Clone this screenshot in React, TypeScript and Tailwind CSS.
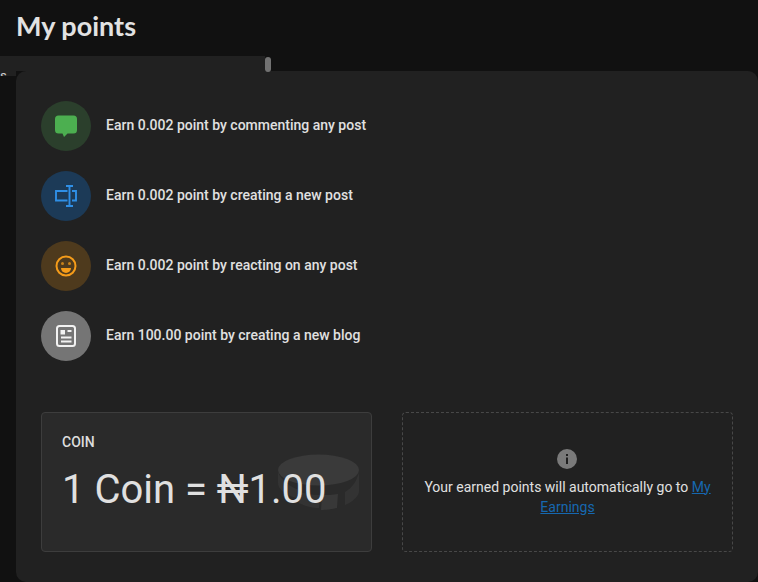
import React from "react";

const rows = [
  {
    text: "Earn 0.002 point by commenting any post",
    circle: "bg-[#2b3f2c]",
    icon: (
      <svg width="24" height="24" viewBox="0 0 24 24">
        <path d="M4.500 1.500h15a3.500 3.500 0 0 1 3.500 3.500v11a3.500 3.500 0 0 1-3.500 3.500h-6l-3.500 3.500-1.500-3.500H4.500a3.500 3.500 0 0 1-3.500-3.500V5a3.500 3.500 0 0 1 3.500-3.500z" fill="#4caf50" />
      </svg>
    ),
  },
  {
    text: "Earn 0.002 point by creating a new post",
    circle: "bg-[#1c3a57]",
    icon: (
      <svg width="24" height="24" viewBox="0 0 24 24" fill="none" stroke="#2f8fe6" strokeWidth="1.900">
        <path d="M13.500 7H2v9.500h11.500" />
        <path d="M18 7h4v9.500h-4" />
        <path d="M15.500 2v20M12 2h7M12 22h7" />
      </svg>
    ),
  },
  {
    text: "Earn 0.002 point by reacting on any post",
    circle: "bg-[#4e3a1d]",
    icon: (
      <svg width="24" height="24" viewBox="0 0 24 24" fill="none">
        <circle cx="12" cy="12" r="9.500" stroke="#f59c1a" strokeWidth="2" />
        <circle cx="8.500" cy="9.500" r="1.500" fill="#c9821a" />
        <circle cx="15.500" cy="9.500" r="1.500" fill="#c9821a" />
        <path d="M7 14h10a5 5 0 0 1-10 0z" fill="#f59c1a" />
      </svg>
    ),
  },
  {
    text: "Earn 100.00 point by creating a new blog",
    circle: "bg-[#757575]",
    icon: (
      <svg width="24" height="24" viewBox="0 0 24 24" fill="none" stroke="#f2f2f2" strokeWidth="2">
        <rect x="3" y="2" width="18" height="20" rx="2.500" />
        <rect x="7" y="6.500" width="3.500" height="3.500" fill="#f2f2f2" strokeWidth="1" />
        <path d="M13.500 7h4M7 13.500h10.500M7 17.500h10.500" strokeWidth="1.800" />
      </svg>
    ),
  },
];

export default function App() {
  return (
    <div className="h-[582px] w-[758px] overflow-hidden bg-[#111111] flex flex-col font-['Roboto',sans-serif] text-[#e4e4e4]">
      <header className="h-14 pl-4 pt-[9px] shrink-0">
        <h1 className="font-['Lato',sans-serif] text-[27px] leading-[34px] font-bold text-[#e2e2e2]">My points</h1>
      </header>

      <div className="relative h-[15px] shrink-0 flex">
        <div className="w-[265px] bg-[#212121]" />
        <div className="absolute left-[265px] top-px h-[15px] w-[6px] rounded-[3px] bg-[#727272]" />
      </div>

      <div className="flex flex-1 min-h-0">
        <div className="w-4 shrink-0">
          <div className="h-[5px] bg-[#212121] overflow-hidden text-[13px] leading-[9px] text-[#cccccc]">s</div>
        </div>

        <main className="flex-1 rounded-[10px] bg-[#212121] px-[25px] pt-[30px]">
          <ul className="flex flex-col gap-5">
            {rows.map((row) => (
              <li key={row.text} className="flex items-center gap-[15px]">
                <div className={`flex size-[50px] items-center justify-center rounded-full ${row.circle}`}>
                  {row.icon}
                </div>
                <span className="pb-0.5 text-sm font-medium text-[#e0e0e0]">{row.text}</span>
              </li>
            ))}
          </ul>

          <div className="mt-[51px] grid grid-cols-2 gap-[30px]">
            <div className="relative h-[140px] overflow-hidden rounded border border-[#3d3d3d] bg-[#2a2a2a] px-5 pt-[20px]">
              <div className="text-sm font-medium leading-[18px] text-[#dddddd]">COIN</div>
              <div className="absolute right-[12px] top-[41px]">
                <svg width="81" height="56" viewBox="0 0 81 56">
                  <path d="M0 18v11c0 6 6 11 18 15l4-8C11 33 3 26 0 18z" fill="#333333" />
                  <path d="M22 38l-1 11c5 3 14 5 20 5l1-13c-8 0-14-1-20-3z" fill="#333333" />
                  <path d="M44 41l-1 15c4 0 12-1 16-2l1-14c-5 1-11 1-16 1z" fill="#383838" />
                  <path d="M67 38v13c8-3 14-9 14-14V18c-2 9-7 16-14 20z" fill="#333333" />
                  <ellipse cx="40.500" cy="16" rx="40.500" ry="15.500" fill="#3a3a3a" />
                </svg>
              </div>
              <div className="relative mt-[13px] text-[40px] leading-[52px] text-[#e0e0e0]">1 Coin = ₦1.00</div>
            </div>

            <div className="flex h-[140px] flex-col items-center justify-center rounded border border-dashed border-[#484848] px-5 text-center">
              <svg width="22" height="22" viewBox="0 0 22 22" className="mb-[7px] mr-[2px]">
                <circle cx="11" cy="11" r="10" fill="#7a7a7a" />
                <path d="M10 9.500h2V16h-2zM10 6h2v2h-2z" fill="#1f1f1f" />
              </svg>
              <p className="text-sm leading-5 text-[#e0e0e0]">
                Your earned points will automatically go to{" "}
                <a href="#" className="text-[#1668b0] underline">My Earnings</a>
              </p>
            </div>
          </div>
        </main>
      </div>
    </div>
  );
}
